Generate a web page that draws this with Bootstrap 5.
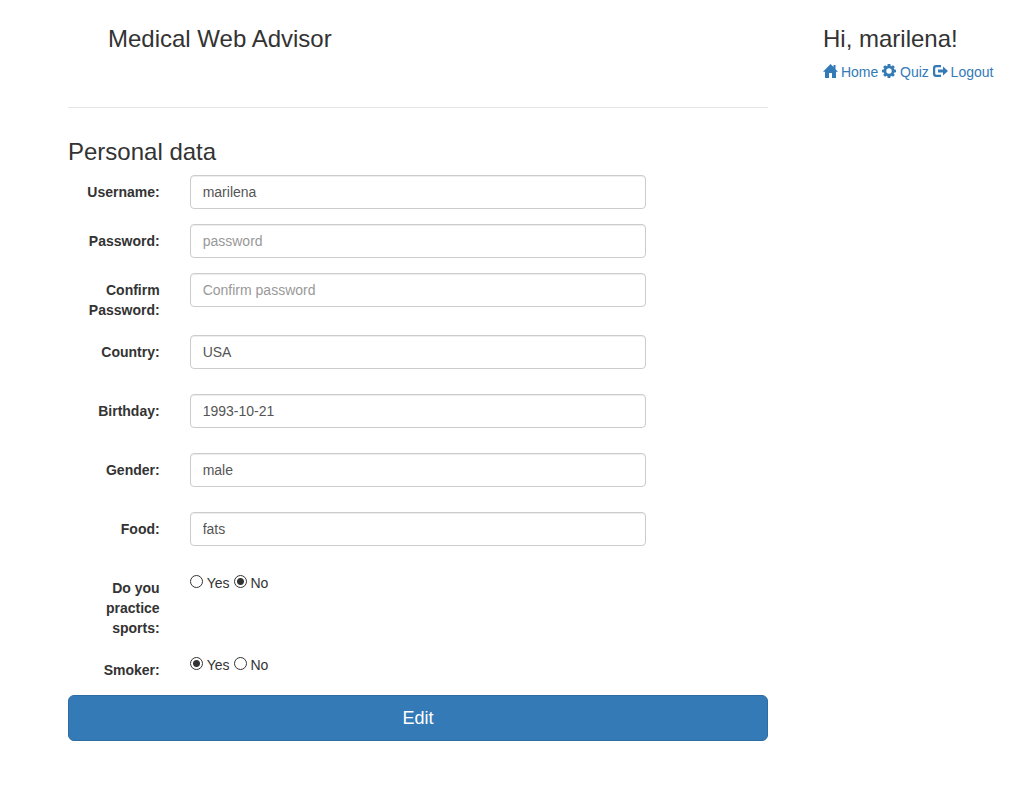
<!DOCTYPE html>
<html lang="en">
<head>
<meta charset="utf-8">
<meta name="viewport" content="width=device-width, initial-scale=1">
<title>Medical Web Advisor</title>
<link rel="stylesheet" href="https://cdn.jsdelivr.net/npm/bootstrap@5.3.0/dist/css/bootstrap.min.css">
<style>
  body { font-family: "Liberation Sans", Arial, sans-serif; font-size: 14px; line-height: 20px; color: #333; }
  h3 { font-size: 24px; line-height: 26px; font-weight: 400; margin: 0 0 10px; }
  .page { display: grid; grid-template-columns: minmax(0, 700px) auto; justify-content: start; column-gap: 55px; padding: 26px 0 24px 68px; }
  .brand { padding: 0 0 45px 40px; border-bottom: 1px solid #e5e5e5; }
  .user-links { white-space: nowrap; }
  .user-links a { color: #337ab7; text-decoration: none; }
  .user-links svg { width: 14px; height: 14px; fill: currentColor; vertical-align: -1px; overflow: visible; }
  .profile { margin-top: 31px; }
  .profile .row { --bs-gutter-x: 30px; margin-bottom: 15px; }
  .profile .spaced { margin-bottom: 25px; }
  .field-label { padding-top: 7px; font-weight: 700; text-align: right; }
  .form-control { height: 34px; padding: 6px 12px; font-size: 14px; line-height: 20px; color: #555; border: 1px solid #ccc; border-radius: 4px; box-shadow: inset 0 1px 1px rgba(0,0,0,.075); }
  .form-control::placeholder { color: #999; }
  .choices { display: flex; align-items: flex-start; gap: 4px; padding-top: 2px; }
  .choices input { appearance: none; flex: none; width: 13px; height: 13px; margin: 2px 0 0; border: 1px solid #333; border-radius: 50%; background: #fff; }
  .choices input:checked { background: radial-gradient(circle, #333 3px, #fff 4px); }
  .btn-edit { --bs-btn-color: #fff; --bs-btn-bg: #337ab7; --bs-btn-border-color: #2e6da4; --bs-btn-hover-color: #fff; --bs-btn-hover-bg: #286090; --bs-btn-padding-y: 10px; --bs-btn-font-size: 18px; --bs-btn-border-radius: 6px; line-height: 24px; }
  @media (max-width: 800px) { .page { grid-template-columns: minmax(0, 1fr); padding: 24px; row-gap: 24px; } }
</style>
</head>
<body>
<div class="page">
  <main>
    <header class="brand"><h3>Medical Web Advisor</h3></header>
    <form class="profile">
      <h3>Personal data</h3>
      <div class="row">
        <label class="col-2 field-label" for="username">Username:</label>
        <div class="col-8"><input class="form-control" id="username" type="text" value="marilena"></div>
      </div>
      <div class="row">
        <label class="col-2 field-label" for="password">Password:</label>
        <div class="col-8"><input class="form-control" id="password" type="password" placeholder="password"></div>
      </div>
      <div class="row">
        <label class="col-2 field-label" for="confirm">Confirm Password:</label>
        <div class="col-8"><input class="form-control" id="confirm" type="password" placeholder="Confirm password"></div>
      </div>
      <div class="row spaced">
        <label class="col-2 field-label" for="country">Country:</label>
        <div class="col-8"><input class="form-control" id="country" type="text" value="USA"></div>
      </div>
      <div class="row spaced">
        <label class="col-2 field-label" for="birthday">Birthday:</label>
        <div class="col-8"><input class="form-control" id="birthday" type="text" value="1993-10-21"></div>
      </div>
      <div class="row spaced">
        <label class="col-2 field-label" for="gender">Gender:</label>
        <div class="col-8"><input class="form-control" id="gender" type="text" value="male"></div>
      </div>
      <div class="row spaced">
        <label class="col-2 field-label" for="food">Food:</label>
        <div class="col-8"><input class="form-control" id="food" type="text" value="fats"></div>
      </div>
      <div class="row" role="radiogroup" aria-labelledby="sports-label">
        <div class="col-2 field-label" id="sports-label">Do you practice sports:</div>
        <div class="col-8 choices">
          <input type="radio" name="sports" id="sports-yes"><label for="sports-yes">Yes</label>
          <input type="radio" name="sports" id="sports-no" checked><label for="sports-no">No</label>
        </div>
      </div>
      <div class="row" role="radiogroup" aria-labelledby="smoker-label">
        <div class="col-2 field-label" id="smoker-label">Smoker:</div>
        <div class="col-8 choices">
          <input type="radio" name="smoker" id="smoker-yes" checked><label for="smoker-yes">Yes</label>
          <input type="radio" name="smoker" id="smoker-no"><label for="smoker-no">No</label>
        </div>
      </div>
      <button class="btn btn-edit w-100" type="submit">Edit</button>
    </form>
  </main>
  <aside>
    <h3>Hi, marilena!</h3>
    <nav class="user-links">
      <a href="#"><svg viewBox="0 0 14 14" aria-hidden="true"><path d="M7.500 0 0 7.800h2V14h4V9h3v5h4V7.800h2L12.500 5.200V1h-2v2.100z"/></svg> Home</a>
      <a href="#"><svg viewBox="0 0 14 14" aria-hidden="true"><circle cx="7" cy="7" r="4" fill="none" stroke="currentColor" stroke-width="2.600"/><path d="M5.700 0h2.600l.5 2.600H5.200zM5.700 14h2.600l.5-2.600H5.200zM0 5.700v2.600l2.600.5V5.200zM14 5.700v2.600l-2.600.5V5.200zM1.200 3 3 1.200l2.100 1.400-2.500 2.500zM12.800 3 11 1.200 8.900 2.600l2.500 2.500zM1.200 11 3 12.800l2.100-1.400-2.500-2.500zM12.800 11 11 12.800l-2.100-1.400 2.500-2.500z"/></svg> Quiz</a>
      <a href="#"><svg viewBox="0 0 14 14" aria-hidden="true"><path d="M8 1H3Q0 1 0 4v6Q0 13 3 13h5v-2.200H3.400Q2.200 10.800 2.200 9.600V4.400Q2.200 3.200 3.400 3.200H8zM10 2.600v3H5v2.800h5v3L15 7z"/></svg> Logout</a>
    </nav>
  </aside>
</div>
<script src="https://cdn.jsdelivr.net/npm/bootstrap@5.3.0/dist/js/bootstrap.bundle.min.js"></script>
</body>
</html>
